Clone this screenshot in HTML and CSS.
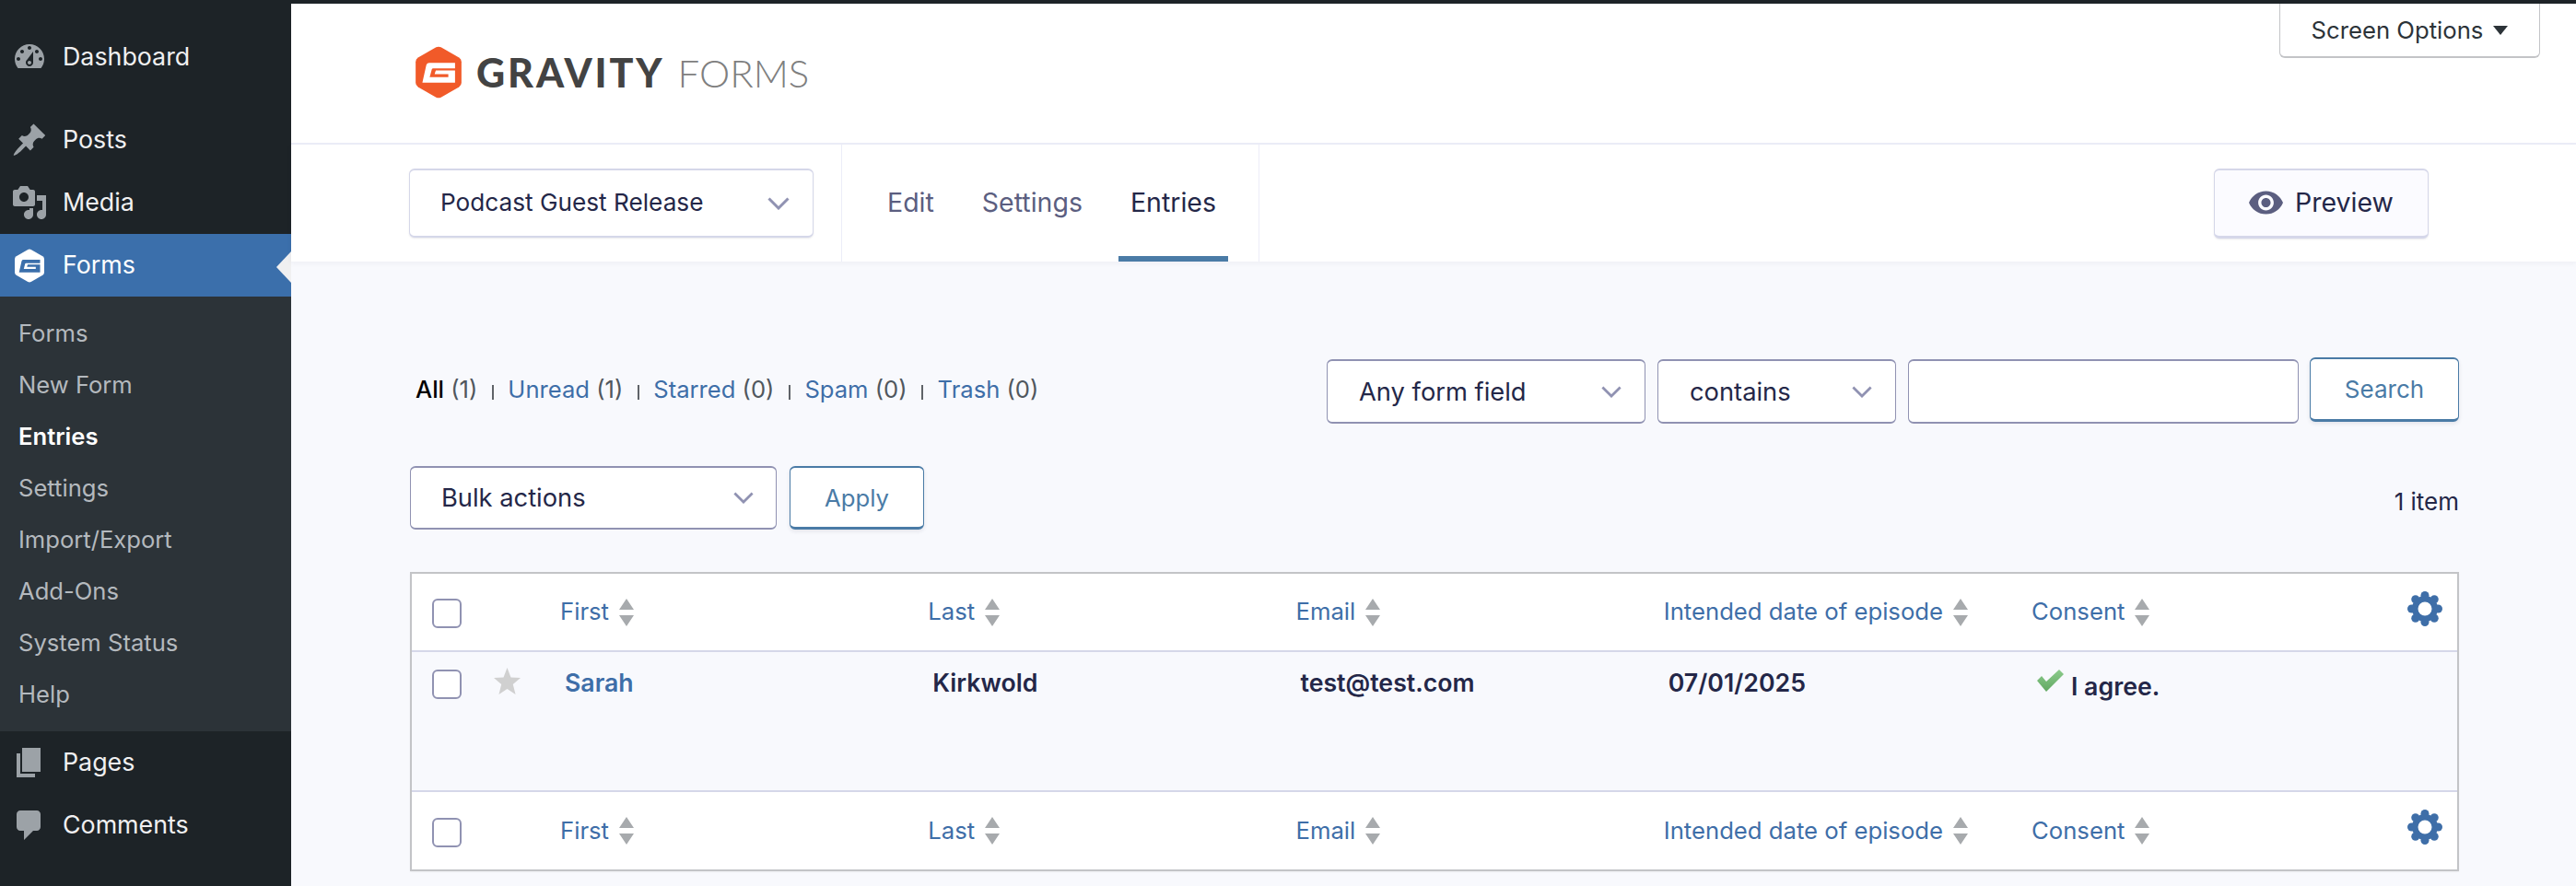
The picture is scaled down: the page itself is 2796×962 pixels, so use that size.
FILE: index.html
```html
<!DOCTYPE html>
<html lang="en">
<head>
<meta charset="utf-8">
<title>Entries ‹ Gravity Forms</title>
<link rel="stylesheet" href="styles.css">
</head>
<body>
<div class="topstrip"></div>
<div class="shell">
  <aside class="sidebar">
    <nav class="menu">
      <a class="item item-first"><svg class="dash" viewBox="0 0 20 20"><path fill-rule="evenodd" d="M3.76 16h12.48c1.1-1.37 1.76-3.11 1.76-5 0-4.42-3.58-8-8-8s-8 3.58-8 8c0 1.89.66 3.63 1.76 5zM10 4c.55 0 1 .45 1 1s-.45 1-1 1-1-.45-1-1 .45-1 1-1zM6 6c.55 0 1 .45 1 1s-.45 1-1 1-1-.45-1-1 .45-1 1-1zm8 0c.55 0 1 .45 1 1s-.45 1-1 1-1-.45-1-1 .45-1 1-1zm-5.37 5.55L12 7v6c0 1.1-.9 2-2 2s-2-.9-2-2c0-.57.24-1.08.63-1.45zM4 10c.55 0 1 .45 1 1s-.45 1-1 1-1-.45-1-1 .45-1 1-1zm12 0c.55 0 1 .45 1 1s-.45 1-1 1-1-.45-1-1 .45-1 1-1zm-5 3c0-.55-.45-1-1-1s-1 .45-1 1 .45 1 1 1 1-.45 1-1z"/></svg><span>Dashboard</span></a>
      <a class="item"><svg class="dash" viewBox="0 0 20 20"><path d="M10.44 3.02l1.82-1.82 6.36 6.35-1.83 1.82c-1.05-.68-2.48-.57-3.41.36l-.75.75c-.92.93-1.04 2.35-.35 3.41l-1.83 1.82-2.41-2.41-2.8 2.79c-.42.42-3.38 2.71-3.8 2.29s1.86-3.39 2.28-3.81l2.79-2.79L4.1 9.36l1.83-1.82c1.05.69 2.48.57 3.4-.36l.75-.75c.93-.92 1.05-2.35.36-3.41z"/></svg><span>Posts</span></a>
      <a class="item"><svg class="dash" viewBox="0 0 20 20"><path fill-rule="evenodd" d="M13 11V4c0-.55-.45-1-1-1h-1.67L9 1H5L3.67 3H2c-.55 0-1 .45-1 1v7c0 .55.45 1 1 1h10c.55 0 1-.45 1-1zM7 4.5c1.38 0 2.5 1.12 2.5 2.5S8.38 9.5 7 9.5 4.5 8.38 4.5 7 5.62 4.5 7 4.5zM14 6h5v10.5c0 1.38-1.12 2.5-2.5 2.5S14 17.88 14 16.5s1.12-2.5 2.5-2.5c.17 0 .34.02.5.05V9h-3V6zm-4 8.05V13h2v3.5c0 1.38-1.12 2.5-2.5 2.5S7 17.88 7 16.5 8.12 14 9.5 14c.17 0 .34.02.5.05z"/></svg><span>Media</span></a>
      <a class="item item-active"><svg class="gf-side" viewBox="0 0 150 172"><path class="hex-white" d="M67 4 Q75 0 83 4 L142 38 Q150 43 150 52 L150 120 Q150 129 142 134 L83 168 Q75 172 67 168 L8 134 Q0 129 0 120 L0 52 Q0 43 8 38Z"/><path class="g-blue" d="M45 55H129V73H57Q54 73 53 76L46 102H107V92H62L66 80H129V120H22L35 62Q37 55 45 55Z"/></svg><span>Forms</span></a>
      <ul class="sub">
        <li>Forms</li>
        <li>New Form</li>
        <li class="sub-current">Entries</li>
        <li>Settings</li>
        <li>Import/Export</li>
        <li>Add-Ons</li>
        <li>System Status</li>
        <li>Help</li>
      </ul>
      <a class="item"><svg class="dash" viewBox="0 0 20 20"><path d="M6 15V2h10v13H6zm-1 1h8v2H3V5h2v11z"/></svg><span>Pages</span></a>
      <a class="item"><svg class="dash" viewBox="0 0 20 20"><path d="M5 2h9c1.1 0 2 .9 2 2v7c0 1.1-.9 2-2 2h-2l-5 5v-5H5c-1.1 0-2-.9-2-2V4c0-1.1.9-2 2-2z"/></svg><span>Comments</span></a>
    </nav>
  </aside>

  <main class="main">
    <header class="brandbar">
      <div class="brand">
        <svg class="gf-logo" viewBox="0 0 150 172"><path class="hex-orange" d="M67 4 Q75 0 83 4 L142 38 Q150 43 150 52 L150 120 Q150 129 142 134 L83 168 Q75 172 67 168 L8 134 Q0 129 0 120 L0 52 Q0 43 8 38Z"/><path class="g-white" d="M45 55H129V73H57Q54 73 53 76L46 102H107V92H62L66 80H129V120H22L35 62Q37 55 45 55Z"/></svg>
        <span class="brand-strong">GRAVITY</span><span class="brand-light">FORMS</span>
      </div>
      <button class="screen-options">Screen Options<svg class="tri" viewBox="0 0 16 10"><path d="M0 0H16L8 10Z"/></svg></button>
    </header>

    <div class="toolbar">
      <div class="field form-picker"><span>Podcast Guest Release</span><svg class="chev" viewBox="0 0 24 14"><path d="M1.5 1.5L12 12 22.500 1.500"/></svg></div>
      <nav class="tabs">
        <a class="tab">Edit</a>
        <a class="tab">Settings</a>
        <a class="tab tab-active">Entries</a>
      </nav>
      <button class="preview"><svg class="eye" viewBox="1 4.500 22 15"><path fill-rule="evenodd" d="M12 4.500C7 4.500 2.730 7.610 1 12c1.730 4.390 6 7.500 11 7.500s9.270-3.110 11-7.500c-1.730-4.390-6-7.500-11-7.500zM12 17c-2.760 0-5-2.240-5-5s2.240-5 5-5 5 2.240 5 5-2.240 5-5 5zm0-8c-1.660 0-3 1.340-3 3s1.340 3 3 3 3-1.340 3-3-1.340-3-3-3z"/></svg><span>Preview</span></button>
    </div>

    <section class="content">
      <div class="row-filter">
        <ul class="views">
          <li><b>All</b> <i>(1)</i></li><li class="sep"></li>
          <li><a>Unread</a> <i>(1)</i></li><li class="sep"></li>
          <li><a>Starred</a> <i>(0)</i></li><li class="sep"></li>
          <li><a>Spam</a> <i>(0)</i></li><li class="sep"></li>
          <li><a>Trash</a> <i>(0)</i></li>
        </ul>
        <div class="search">
          <div class="field f-any"><span>Any form field</span><svg class="chev chev-sm" viewBox="0 0 24 14"><path d="M1.500 1.500L12 12 22.500 1.500"/></svg></div>
          <div class="field f-contains"><span>contains</span><svg class="chev chev-sm" viewBox="0 0 24 14"><path d="M1.500 1.500L12 12 22.500 1.500"/></svg></div>
          <input class="field f-input" type="text" aria-label="Search">
          <button class="btn btn-search">Search</button>
        </div>
      </div>

      <div class="row-bulk">
        <div class="bulk">
          <div class="field f-bulk"><span>Bulk actions</span><svg class="chev chev-sm" viewBox="0 0 24 14"><path d="M1.500 1.500L12 12 22.500 1.500"/></svg></div>
          <button class="btn btn-apply">Apply</button>
        </div>
        <span class="count">1 item</span>
      </div>

      <div class="table">
        <div class="tr thead">
          <span class="check"></span>
          <a class="col"><span>First</span><svg class="sort" viewBox="0 0 16 30"><path d="M8 0L16 12H0ZM0 18H16L8 30Z"/></svg></a>
          <a class="col"><span>Last</span><svg class="sort" viewBox="0 0 16 30"><path d="M8 0L16 12H0ZM0 18H16L8 30Z"/></svg></a>
          <a class="col"><span>Email</span><svg class="sort" viewBox="0 0 16 30"><path d="M8 0L16 12H0ZM0 18H16L8 30Z"/></svg></a>
          <a class="col"><span>Intended date of episode</span><svg class="sort" viewBox="0 0 16 30"><path d="M8 0L16 12H0ZM0 18H16L8 30Z"/></svg></a>
          <a class="col"><span>Consent</span><svg class="sort" viewBox="0 0 16 30"><path d="M8 0L16 12H0ZM0 18H16L8 30Z"/></svg></a>
          <svg class="gear" viewBox="0 0 38 38"><circle class="gear-body" cx="19" cy="19" r="14"/><circle cx="19" cy="4.500" r="4.500"/><circle cx="29.250" cy="8.750" r="4.500"/><circle cx="33.500" cy="19" r="4.500"/><circle cx="29.250" cy="29.250" r="4.500"/><circle cx="19" cy="33.500" r="4.500"/><circle cx="8.750" cy="29.250" r="4.500"/><circle cx="4.500" cy="19" r="4.500"/><circle cx="8.750" cy="8.750" r="4.500"/><circle class="gear-hole" cx="19" cy="19" r="7.500"/></svg>
        </div>
        <div class="tr tbody">
          <span class="check"></span>
          <svg class="star" viewBox="0 0 24 24"><path d="M12 0l3.300 8.600 8.700.5-6.800 5.700 2.300 9.200L12 19l-7.500 5 2.300-9.200L0 9.100l8.700-.5z"/></svg>
          <a class="cell cell-link">Sarah</a>
          <span class="cell">Kirkwold</span>
          <span class="cell">test@test.com</span>
          <span class="cell">07/01/2025</span>
          <span class="cell cell-consent"><svg class="tick" viewBox="0 0 31 26"><defs><linearGradient id="tick-fill" x1="0" y1="0" x2="0" y2="1"><stop offset="0" stop-color="#8ccb8c"/><stop offset="1" stop-color="#62a862"/></linearGradient></defs><path fill="url(#tick-fill)" d="M1 13L6 8 11 14 25 1 30 6 11 25Z"/></svg>I agree.</span>
        </div>
        <div class="tr tfoot">
          <span class="check"></span>
          <a class="col"><span>First</span><svg class="sort" viewBox="0 0 16 30"><path d="M8 0L16 12H0ZM0 18H16L8 30Z"/></svg></a>
          <a class="col"><span>Last</span><svg class="sort" viewBox="0 0 16 30"><path d="M8 0L16 12H0ZM0 18H16L8 30Z"/></svg></a>
          <a class="col"><span>Email</span><svg class="sort" viewBox="0 0 16 30"><path d="M8 0L16 12H0ZM0 18H16L8 30Z"/></svg></a>
          <a class="col"><span>Intended date of episode</span><svg class="sort" viewBox="0 0 16 30"><path d="M8 0L16 12H0ZM0 18H16L8 30Z"/></svg></a>
          <a class="col"><span>Consent</span><svg class="sort" viewBox="0 0 16 30"><path d="M8 0L16 12H0ZM0 18H16L8 30Z"/></svg></a>
          <svg class="gear" viewBox="0 0 38 38"><circle class="gear-body" cx="19" cy="19" r="14"/><circle cx="19" cy="4.500" r="4.500"/><circle cx="29.250" cy="8.750" r="4.500"/><circle cx="33.500" cy="19" r="4.500"/><circle cx="29.250" cy="29.250" r="4.500"/><circle cx="19" cy="33.500" r="4.500"/><circle cx="8.750" cy="29.250" r="4.500"/><circle cx="4.500" cy="19" r="4.500"/><circle cx="8.750" cy="8.750" r="4.500"/><circle class="gear-hole" cx="19" cy="19" r="7.500"/></svg>
        </div>
      </div>
    </section>
  </main>
</div>
</body>
</html>
```

FILE: styles.css
```css
* { box-sizing: border-box; }
html, body { margin: 0; height: 962px; overflow: hidden; }
body { font-family: Inter, "Liberation Sans", sans-serif; font-size: 26px; color: #242748; background: #f8f9fd; }
ul { margin: 0; padding: 0; list-style: none; }
a { text-decoration: none; }
button { font-family: inherit; cursor: pointer; }

.topstrip { height: 4px; background: #1d2327; }
.shell { display: flex; height: 958px; }

/* Sidebar */
.sidebar { flex: 0 0 316px; background: #1d2327; padding-top: 24px; }
.menu { display: flex; flex-direction: column; }
.item { display: flex; align-items: center; height: 68px; padding-left: 12px; color: #f0f0f1; font-size: 26.800px; position: relative; }
.item span { margin-bottom: 2px; }
.item-first { margin-bottom: 22px; }
.item-active { background: #3b6fab; color: #fff; }
.item-active::after { content: ""; position: absolute; right: 0; top: 19px; border: 17px solid transparent; border-left: 0; border-right: 16px solid #f0f0f1; }
.dash { width: 40px; height: 40px; margin-right: 16px; fill: #9ca2a7; flex: none; }
.gf-side { width: 32px; height: 37px; margin: 0 20px 0 4px; flex: none; }
.hex-white { fill: #fff; }
.g-blue { fill: #3b6fab; }
.sub { background: #2c3338; height: 472px; padding-top: 12px; }
.sub li { height: 56px; line-height: 56px; padding-left: 20px; color: #b4b9be; font-size: 25.600px; }
.sub .sub-current { color: #fff; font-weight: 600; }

/* Brand bar */
.main { flex: 1; display: flex; flex-direction: column; min-width: 0; }
.brandbar { height: 153px; background: #fff; border-bottom: 2px solid #ecedf8; display: flex; justify-content: space-between; align-items: flex-start; padding: 0 39px 0 135px; }
.brand { display: flex; align-items: center; height: 149px; }
.gf-logo { width: 50px; height: 57px; margin-right: 16px; }
.hex-orange { fill: #f15a29; }
.g-white { fill: #fff; }
.brand-strong { font-family: Lato, sans-serif; font-weight: 900; font-size: 43px; letter-spacing: 2.900px; color: #434343; margin-right: 14px; }
.brand-light { font-family: Lato, sans-serif; font-weight: 300; font-size: 42px; color: #7f7f7f; }
.screen-options { width: 283px; height: 59px; background: #fff; border: 1px solid #c3c4c7; border-top: 0; border-bottom-width: 2px; border-radius: 0 0 6px 6px; font-size: 25.700px; color: #2c3338; display: flex; align-items: center; justify-content: center; gap: 11px; padding: 0; }
.tri { width: 16px; height: 10px; fill: #2c3338; }

/* Toolbar */
.toolbar { height: 127px; background: #fff; display: flex; align-items: center; padding: 0 160px 0 128px; box-shadow: 0 2px 6px rgba(36, 39, 72, .05); position: relative; }
.field { background: #fff; border: 1px solid #9092b2; border-bottom-width: 2px; border-top-width: 2px; border-radius: 6px; display: flex; align-items: center; justify-content: space-between; color: #242748; }
.chev { width: 24px; height: 14px; fill: none; stroke: #9092b2; stroke-width: 3; flex: none; }
.chev-sm { width: 22px; height: 13px; }
.form-picker { width: 439px; height: 75px; padding: 0 25px 0 33px; border-color: #d5d7e9; font-size: 26.200px; box-shadow: 0 1px 2px rgba(36, 39, 72, .1); }
.form-picker span { margin-bottom: 3px; }
.tabs { display: flex; gap: 26px; align-self: stretch; margin-left: 30px; padding: 0 33px 0 36px; border-left: 1px solid #ecedf8; border-right: 1px solid #ecedf8; }
.tab { display: flex; align-items: center; padding: 0 13px 2px; font-size: 28.500px; color: #5b5e80; border-bottom: 6px solid transparent; border-top: 6px solid transparent; }
.tab-active { color: #242748; border-bottom-color: #4a7ba6; }
.preview { margin-left: auto; width: 233px; height: 76px; background: #fbfbff; border: 1px solid #d5d7e9; border-top-width: 2px; border-bottom-width: 3px; border-radius: 6px; font-size: 28.500px; color: #242748; display: flex; align-items: center; justify-content: center; gap: 13px; padding: 0; box-shadow: 0 1px 2px rgba(36, 39, 72, .1); }
.preview span { margin-bottom: 2px; }
.eye { width: 37px; height: 26px; fill: #5b5e80; }

/* Content */
.content { padding: 104px 127px 0 129px; }
.row-filter { display: flex; justify-content: space-between; align-items: center; height: 72px; }
.views { display: flex; gap: 15.500px; padding: 0 0 4px 6px; font-size: 25.600px; }
.views b { font-weight: 500; color: #000; }
.views i { font-style: normal; color: #50575e; }
.views a { color: #3e6ea8; }
.views .sep { width: 2px; height: 16px; background: #5f6368; align-self: center; margin-top: 8px; }
.search { display: flex; gap: 13px; align-items: flex-start; }
.search .field { margin-top: 2px; }
.f-any { width: 346px; height: 70px; padding: 0 25px 0 34px; font-size: 27.300px; }
.f-contains { width: 259px; height: 70px; padding: 0 25px 0 34px; font-size: 27.300px; }
.f-input { width: 424px; height: 70px; padding: 0 12px; font: inherit; outline: 0; }
.btn { background: #fff; border: 2px solid #4a7ba6; border-width: 2px 1px 3px; border-radius: 6px; color: #4a7ba6; padding: 0; box-shadow: 0 2px 4px rgba(36, 39, 72, .1); }
.btn-search { width: 162px; height: 70px; font-size: 26px; margin-left: -1px; }
.row-bulk { display: flex; justify-content: space-between; align-items: center; height: 69px; margin-top: 46px; }
.bulk { display: flex; gap: 14px; }
.f-bulk { width: 398px; height: 69px; padding: 0 24px 0 33px; font-size: 27.300px; border-width: 2px 1px; }
.f-bulk span { margin-bottom: 1px; }
.btn-apply { width: 146px; height: 69px; font-size: 25.700px; }
.count { font-size: 26px; padding-top: 8px; }

/* Table */
.table { margin-top: 46px; border: 2px solid #c3c4c7; background: #fff; box-shadow: 0 1px 2px rgba(0, 0, 0, .05); }
.tr { display: grid; grid-template-columns: 89px 72px repeat(5, 399.250px) 1fr; align-items: center; }
.thead { height: 85px; border-bottom: 2px solid #d5d7e9; }
.tfoot { height: 86px; border-top: 2px solid #d5d7e9; }
.tbody { height: 150px; background: #f8f9fd; align-items: start; }
.check { width: 32px; height: 32px; margin-left: 22px; background: #fff; border: 2px solid #9092b2; border-radius: 6px; }
.thead .check { margin-top: 3px; grid-column: 1 / 3; }
.tfoot .check { margin-top: 4px; grid-column: 1 / 3; }
.tbody .check { margin-top: 19px; }
.col { display: flex; align-items: center; gap: 11px; color: #3e6ea8; font-size: 25.700px; }
.col span { margin-bottom: 2px; }
.sort { width: 16px; height: 30px; fill: #a7aaad; }
.gear { width: 38px; height: 38px; fill: #3e6ea8; margin-left: 9px; margin-top: -8px; }
.gear .gear-hole { fill: #fff; }
.star { width: 29px; height: 29px; fill: #d0d0d0; margin-top: 17px; }
.cell { font-size: 26.700px; font-weight: 600; color: #242748; padding: 18px 0 0 5px; line-height: 30px; }
.cell-link { color: #3e6ea8; }
.cell-consent { display: flex; align-items: flex-end; gap: 7px; padding-top: 18px; }
.tick { width: 31px; height: 26px; margin-bottom: 8px; flex: none; }
```
